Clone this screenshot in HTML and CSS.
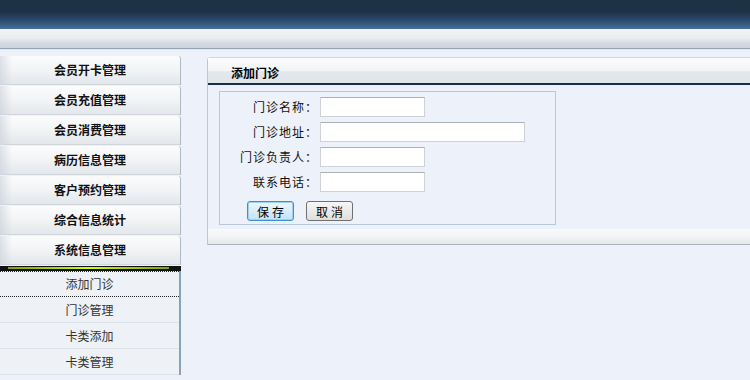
FILE: index.html
```html
<!DOCTYPE html>
<html lang="zh-CN">
<head>
    <meta charset="UTF-8">
    <title>添加门诊</title>
    <link rel="stylesheet" href="styles.css">
</head>
<body>

    <div class="header"></div>
    <div class="navbar"></div>

    <div class="main">
        <div class="sidebar">
            <div class="menu-item">会员开卡管理</div>
            <div class="menu-item">会员充值管理</div>
            <div class="menu-item">会员消费管理</div>
            <div class="menu-item">病历信息管理</div>
            <div class="menu-item">客户预约管理</div>
            <div class="menu-item">综合信息统计</div>
            <div class="menu-item">系统信息管理</div>
            <div class="menu-bar"></div>
            <ul class="submenu">
                <li class="current">添加门诊</li>
                <li>门诊管理</li>
                <li>卡类添加</li>
                <li>卡类管理</li>
            </ul>
        </div>

        <div class="panel">
            <div class="panel-title">添加门诊</div>
            <div class="panel-body">
                <form class="form-box">
                    <div class="form-row">
                        <label for="name">门诊名称：</label>
                        <input type="text" id="name">
                    </div>
                    <div class="form-row">
                        <label for="addr">门诊地址：</label>
                        <input type="text" id="addr" class="wide">
                    </div>
                    <div class="form-row">
                        <label for="owner">门诊负责人：</label>
                        <input type="text" id="owner">
                    </div>
                    <div class="form-row">
                        <label for="phone">联系电话：</label>
                        <input type="text" id="phone">
                    </div>
                    <div class="form-buttons">
                        <button type="button" class="btn btn-focus">保存</button>
                        <button type="button" class="btn">取消</button>
                    </div>
                </form>
            </div>
            <div class="panel-foot"></div>
        </div>
    </div>

</body>
</html>
```

FILE: styles.css
```css
body {
    margin: 0;
    padding: 0;
    background-color: #edf2fa;
    font-family: "Noto Sans CJK SC", "Liberation Sans", sans-serif;
    font-size: 12px;
    color: #000;
    overflow: hidden;
}

.header {
    height: 29px;
    background: linear-gradient(#1e3246 0%, #1e3246 40%, #2c4b6b 70%, #44719c 100%);
}

.navbar {
    height: 19px;
    background: linear-gradient(#f3f4f6 0%, #e9ecf0 50%, #d2d9e2 75%, #cdd4de 100%);
    border-bottom: 1px solid #93a3b3;
    box-shadow: 0 1px 0 #e4e9f1;
}

.main {
    display: flex;
    align-items: flex-start;
    padding-top: 7px;
}

/* left menu */
.sidebar {
    width: 181px;
    flex-shrink: 0;
}

.menu-item {
    height: 29px;
    line-height: 28px;
    margin-bottom: 1px;
    text-align: center;
    font-weight: bold;
    font-size: 12px;
    color: #111;
    background: linear-gradient(to right, rgba(200, 207, 216, 0.6), rgba(255, 255, 255, 0) 12px),
                linear-gradient(#fcfcfd 0%, #f1f3f5 50%, #e2e6ea 100%);
    border-right: 1px solid #aeb9c6;
    border-top-right-radius: 3px;
    box-shadow: inset 0 -1px 0 #cfd6de;
}

.menu-bar {
    height: 5px;
    background-color: #111;
    position: relative;
}

.menu-bar::after {
    content: "";
    position: absolute;
    left: 8px;
    right: 12px;
    top: 1px;
    height: 2px;
    background: linear-gradient(to right, #7f9c12, #d4ff10 50%, #7f9c12);
}

.submenu {
    list-style: none;
    margin: 0;
    padding: 0;
    border-right: 2px solid #8ba2b6;
}

.submenu li {
    height: 25px;
    line-height: 25px;
    text-align: center;
    color: #333;
    background-color: #eef1f5;
    border-bottom: 1px solid #dde2e8;
}

.submenu li.current {
    border-top: 1px dotted #222;
    border-bottom: 1px dotted #222;
    height: 24px;
    line-height: 24px;
}

/* right panel */
.panel {
    flex: 1;
    margin-left: 26px;
    margin-top: 1px;
    margin-right: -10px;
    border-left: 1px solid #bcc7d3;
    border-top: 1px solid #cfd8e2;
    border-top-left-radius: 4px;
}

.panel-title {
    height: 25px;
    line-height: 30px;
    padding-left: 23px;
    font-weight: bold;
    font-size: 12px;
    background: linear-gradient(#fbfcfc 0%, #f3f5f6 50%, #e3e8ed 55%, #dfe5ea 100%);
    border-bottom: 2px solid #1b2f42;
}

.panel-body {
    padding: 6px 0 4px 11px;
    background-color: #edf2fa;
}

.form-box {
    width: 335px;
    margin: 0;
    padding: 2px 0 3px;
    border: 1px solid #b8c8d8;
}

.form-row {
    display: flex;
    align-items: center;
    height: 25px;
}

.form-row label {
    width: 98px;
    margin-right: 2px;
    text-align: right;
    letter-spacing: 1px;
    color: #111;
}

.form-row input {
    width: 105px;
    height: 20px;
    box-sizing: border-box;
    margin: 0;
    border: 1px solid #cdd2d8;
    border-top-color: #a9b0b8;
    background-color: #fff;
}

.form-row input.wide {
    width: 205px;
}

.form-buttons {
    display: flex;
    gap: 12px;
    margin-top: 7px;
    padding-left: 27px;
}

.btn {
    width: 47px;
    height: 20px;
    padding: 0;
    font-family: "Noto Sans CJK SC", sans-serif;
    font-size: 12px;
    letter-spacing: 3px;
    text-indent: 3px;
    color: #000;
    background: linear-gradient(#f6f6f6, #dedede);
    border: 1px solid #707070;
    border-radius: 3px;
}

.btn-focus {
    border-color: #3c8fd6;
    box-shadow: inset 0 0 0 1px #9fd0f2;
    background: linear-gradient(#eef7fd, #c4e2f6);
}

.panel-foot {
    height: 15px;
    background: linear-gradient(#f8f9fb 0%, #f2f4f6 50%, #e3e7eb 100%);
    border-bottom: 1px solid #a9b1bb;
}
```
